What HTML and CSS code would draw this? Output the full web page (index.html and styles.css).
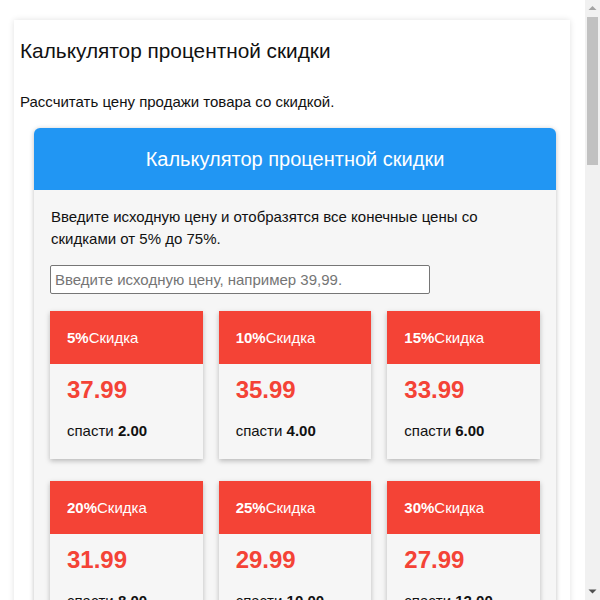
FILE: index.html
```html
<!DOCTYPE html>
<html lang="ru">

<head>
	<meta charset="UTF-8">
	<meta name="viewport" content="width=device-width, initial-scale=1.0">
	<title>Калькулятор процентной скидки</title>
	<link rel="stylesheet" href="styles.css">
</head>

<body>
	<div class="page">
		<h2 class="title">Калькулятор процентной скидки</h2>
		<p class="lead">Рассчитать цену продажи товара со скидкой.</p>

		<div class="calc">
			<div class="calc-head">Калькулятор процентной скидки</div>
			<div class="calc-body">
				<p class="intro">Введите исходную цену и отобразятся все конечные цены со скидками от 5% до 75%.</p>
				<input class="price-input" type="text" placeholder="Введите исходную цену, например 39,99.">

				<div class="cards">
					<div class="card">
						<div class="card-head"><b>5%</b>Скидка</div>
						<div class="card-body">
							<div class="price">37.99</div>
							<div class="save">спасти <b>2.00</b></div>
						</div>
					</div>
					<div class="card">
						<div class="card-head"><b>10%</b>Скидка</div>
						<div class="card-body">
							<div class="price">35.99</div>
							<div class="save">спасти <b>4.00</b></div>
						</div>
					</div>
					<div class="card">
						<div class="card-head"><b>15%</b>Скидка</div>
						<div class="card-body">
							<div class="price">33.99</div>
							<div class="save">спасти <b>6.00</b></div>
						</div>
					</div>
					<div class="card">
						<div class="card-head"><b>20%</b>Скидка</div>
						<div class="card-body">
							<div class="price">31.99</div>
							<div class="save">спасти <b>8.00</b></div>
						</div>
					</div>
					<div class="card">
						<div class="card-head"><b>25%</b>Скидка</div>
						<div class="card-body">
							<div class="price">29.99</div>
							<div class="save">спасти <b>10.00</b></div>
						</div>
					</div>
					<div class="card">
						<div class="card-head"><b>30%</b>Скидка</div>
						<div class="card-body">
							<div class="price">27.99</div>
							<div class="save">спасти <b>12.00</b></div>
						</div>
					</div>
					<div class="card">
						<div class="card-head"><b>35%</b>Скидка</div>
						<div class="card-body">
							<div class="price">25.99</div>
							<div class="save">спасти <b>14.00</b></div>
						</div>
					</div>
					<div class="card">
						<div class="card-head"><b>40%</b>Скидка</div>
						<div class="card-body">
							<div class="price">23.99</div>
							<div class="save">спасти <b>16.00</b></div>
						</div>
					</div>
					<div class="card">
						<div class="card-head"><b>45%</b>Скидка</div>
						<div class="card-body">
							<div class="price">21.99</div>
							<div class="save">спасти <b>18.00</b></div>
						</div>
					</div>
					<div class="card">
						<div class="card-head"><b>50%</b>Скидка</div>
						<div class="card-body">
							<div class="price">19.99</div>
							<div class="save">спасти <b>20.00</b></div>
						</div>
					</div>
					<div class="card">
						<div class="card-head"><b>55%</b>Скидка</div>
						<div class="card-body">
							<div class="price">17.99</div>
							<div class="save">спасти <b>22.00</b></div>
						</div>
					</div>
					<div class="card">
						<div class="card-head"><b>60%</b>Скидка</div>
						<div class="card-body">
							<div class="price">16.00</div>
							<div class="save">спасти <b>23.99</b></div>
						</div>
					</div>
					<div class="card">
						<div class="card-head"><b>65%</b>Скидка</div>
						<div class="card-body">
							<div class="price">14.00</div>
							<div class="save">спасти <b>25.99</b></div>
						</div>
					</div>
					<div class="card">
						<div class="card-head"><b>70%</b>Скидка</div>
						<div class="card-body">
							<div class="price">12.00</div>
							<div class="save">спасти <b>27.99</b></div>
						</div>
					</div>
					<div class="card">
						<div class="card-head"><b>75%</b>Скидка</div>
						<div class="card-body">
							<div class="price">10.00</div>
							<div class="save">спасти <b>29.99</b></div>
						</div>
					</div>
				</div>
			</div>
		</div>
	</div>

	<!-- window scrollbar -->
	<div class="scrollbar">
		<svg class="arrow" width="15" height="17" viewBox="0 0 15 17"><polygon points="3.5,10 7.5,6 11.5,10" fill="#a3a3a3"/></svg>
		<div class="track"><div class="thumb"></div></div>
		<svg class="arrow" width="15" height="17" viewBox="0 0 15 17"><polygon points="3.5,6.5 11.5,6.5 7.5,10.5" fill="#505050"/></svg>
	</div>
</body>

</html>
```

FILE: styles.css
```css
:root {
	--blue: #2196F3;
	--red: #F44336;
	--light: #f6f6f6;
	--text: #111;
}

* {
	box-sizing: border-box;
}

body {
	margin: 0 15px 0 0;
	padding: 0;
	font-family: 'Liberation Sans', Arial, sans-serif;
	background: #fff;
	color: var(--text);
}

.page {
	margin: 20px 15px 20px 14px;
	padding: 1px 6px 30px;
	background: #fff;
	box-shadow: 0 0 6px rgba(0, 0, 0, 0.12);
}

.title {
	margin: 17px 0 0;
	font-size: 20.8px;
	font-weight: 400;
	line-height: 26px;
}

.lead {
	margin: 28px 0 16px;
	font-size: 15px;
	line-height: 20px;
}

.calc {
	margin: 0 8px 0 14px;
	background: var(--light);
	border-radius: 6px;
	box-shadow: 0 1px 5px rgba(0, 0, 0, 0.25);
	overflow: hidden;
}

.calc-head {
	height: 62px;
	line-height: 62px;
	text-align: center;
	background: var(--blue);
	color: #fff;
	font-size: 20px;
}

.calc-body {
	padding: 16px 16px 20px;
}

.intro {
	margin: 0 0 15px 1px;
	font-size: 15px;
	line-height: 22px;
}

.price-input {
	display: block;
	width: 380px;
	height: 29px;
	margin: 0 0 17px;
	padding: 1px 4px;
	border: 1px solid #767676;
	border-radius: 2px;
	font-family: inherit;
	font-size: 15px;
	background: #fff;
}

.price-input::placeholder {
	color: #757575;
}

.cards {
	display: grid;
	grid-template-columns: repeat(3, 1fr);
	column-gap: 16px;
	row-gap: 22px;
}

.card {
	background: var(--light);
	box-shadow: 0 2px 5px rgba(0, 0, 0, 0.25);
}

.card-head {
	height: 53px;
	line-height: 53px;
	padding: 0 17px;
	background: var(--red);
	color: #fff;
	font-size: 15px;
}

.card-body {
	padding: 12px 17px 19px;
}

.price {
	font-size: 24px;
	line-height: 28px;
	font-weight: 700;
	color: var(--red);
}

.save {
	margin-top: 18px;
	font-size: 15px;
	line-height: 18px;
}

/* Scrollbar */
.scrollbar {
	position: fixed;
	top: 0;
	right: 0;
	width: 15px;
	height: 100vh;
	display: flex;
	flex-direction: column;
	background: #f1f1f1;
}

.arrow {
	display: block;
	flex: none;
}

.track {
	flex: 1;
	padding: 0 2px;
}

.thumb {
	height: 148px;
	background: #c1c1c1;
}
```
